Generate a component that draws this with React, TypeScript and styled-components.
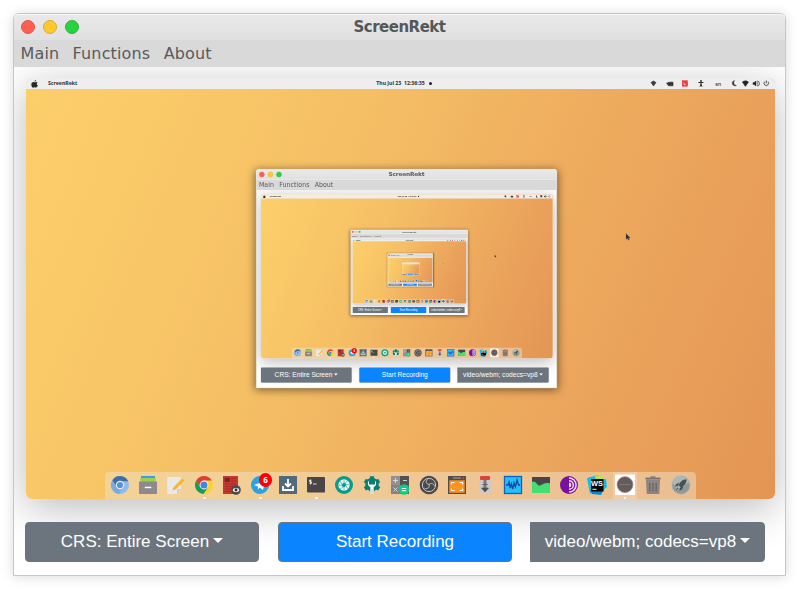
import React from "react";
import styled, { createGlobalStyle, css } from "styled-components";

const MAX_DEPTH = 5;
const NESTED_SCALE = 0.3894;

const GlobalStyle = createGlobalStyle`
  *, *::before, *::after { box-sizing: border-box; }
  body { margin: 0; background: #fff; overflow: hidden; }
`;

const Page = styled.div`
  width: 799px;
  height: 589px;
  padding: 13px;
  background: #fff;
`;

const Frame = styled.section<{ $nested: boolean }>`
  display: flex;
  flex-direction: column;
  width: 773px;
  height: 563px;
  border: 1px solid #c5c8c7;
  border-radius: 6px 6px 0 0;
  background: #fff;
  box-shadow: ${(p) =>
    p.$nested ? "0 4px 22px rgba(0, 0, 0, 0.5)" : "0 1px 12px rgba(0, 0, 0, 0.15)"};
`;

const TitleBar = styled.header`
  display: grid;
  grid-template-columns: 1fr auto 1fr;
  align-items: center;
  flex: none;
  height: 26px;
  padding: 0 7px 1px;
  border-radius: 5px 5px 0 0;
  border-top: 1px solid #f6f6f6;
  background: linear-gradient(#e9e9e9, #e0e0e0);
`;

const Lights = styled.div`
  display: flex;
  gap: 8px;
`;

const Light = styled.span<{ $color: string; $edge: string }>`
  width: 14px;
  height: 14px;
  border-radius: 50%;
  border: 1px solid ${(p) => p.$edge};
  background: ${(p) => p.$color};
`;

const Title = styled.h1`
  margin: 0;
  min-width: 92px;
  height: 24px;
  font: bold 15px/25px "DejaVu Sans", sans-serif;
  letter-spacing: -0.5px;
  color: #55585a;
`;

const MenuBar = styled.nav`
  display: flex;
  flex: none;
  gap: 13.3px;
  height: 27px;
  padding-left: 6.5px;
  background: #d9d9d9;
  font: 16px/27px "DejaVu Sans", sans-serif;
  letter-spacing: 0.15px;
  color: #595959;
`;

const Content = styled.main`
  flex: 1;
  padding: 11px 10px 0 12px;
  overflow: hidden;
`;

const Desktop = styled.div`
  position: relative;
  display: flex;
  flex-direction: column;
  width: 749px;
  height: 421px;
  border-radius: 6px;
  background: linear-gradient(113deg, #fccf6b 0%, #fac968 15%, #f5bf65 38%, #f0b260 55%, #eba45c 75%, #e69a57 92%, #e39654 100%);
  box-shadow: 0 9px 42px rgba(0, 0, 0, 0.27);
`;

const StatusBar = styled.div`
  display: grid;
  grid-template-columns: 1fr auto 1fr;
  align-items: center;
  flex: none;
  height: 11px;
  padding: 0 6px 0 5px;
  border-radius: 6px 6px 0 0;
  background: #eee;
  font: bold 5.2px/11px "Noto Sans", sans-serif;
  color: #303030;
`;

const AppName = styled.div`
  display: flex;
  align-items: center;
  gap: 10px;
`;

const Clock = styled.div`
  display: flex;
  align-items: center;
  gap: 4px;
  padding-left: 8px;
  white-space: pre;
`;

const Dot = styled.span`
  width: 3px;
  height: 3px;
  border-radius: 50%;
  background: #222;
`;

const Tray = styled.svg`
  justify-self: end;
  width: 120px;
  height: 11px;
`;

const Nested = styled.div`
  position: absolute;
  left: 229.8px;
  top: 91px;
  width: 773px;
  height: 563px;
  transform: scale(${NESTED_SCALE});
  transform-origin: 0 0;
`;

const Pointer = styled.svg`
  position: absolute;
  left: 599px;
  top: 155px;
  width: 6px;
  height: 8px;
`;

const Dock = styled.div`
  display: flex;
  justify-content: space-between;
  align-self: flex-start;
  width: 591px;
  height: 27px;
  margin: auto 0 0 79px;
  padding: 0 1px;
  border-radius: 4px 4px 0 0;
  background: rgba(239, 226, 202, 0.5);
`;

const DockItem = styled.div<{ $active?: boolean; $running?: boolean }>`
  position: relative;
  display: flex;
  justify-content: center;
  width: 28px;
  height: 27px;
  padding-top: 3.2px;
  svg { width: 20px; height: 20px; overflow: visible; }
  ${(p) => p.$active && css`
    background: linear-gradient(90deg, transparent 2px, rgba(255,255,255,.2) 2px 26px, transparent 26px);
  `}
  ${(p) => p.$running && css`
    &::after {
      content: "";
      position: absolute;
      left: 13px;
      bottom: 0;
      width: 2.5px;
      height: 2.5px;
      border-radius: 50%;
      background: #fff;
    }
  `}
`;

const Badge = styled.span`
  position: absolute;
  left: 12.5px;
  top: 1px;
  width: 13.5px;
  height: 13.5px;
  border-radius: 50%;
  background: #fb0007;
  color: #fff;
  text-align: center;
  font: bold 8px/13.5px "Noto Sans", sans-serif;
`;

const StormLabel = styled.span`
  position: absolute;
  left: 8px;
  top: 8px;
  width: 12.5px;
  color: #fff;
  text-align: center;
  font: bold 7.4px/8px "Liberation Sans", sans-serif;
`;

const Actions = styled.div`
  display: flex;
  gap: 19px;
  margin: 23px 0 0 -1px;
`;

const Button = styled.button<{ $primary?: boolean; $joined?: boolean }>`
  position: relative;
  display: flex;
  align-items: center;
  justify-content: center;
  flex: none;
  width: ${(p) => (p.$joined ? 235 : 234)}px;
  height: 40px;
  margin-left: ${(p) => (p.$joined ? -1 : 0)}px;
  padding: 0 0 1px;
  border: 1px solid #6c757d;
  border-radius: ${(p) => (p.$joined ? "0 4px 4px 0" : "4px")};
  background: ${(p) => (p.$primary ? "#0a84ff" : "#6c757d")};
  color: #fff;
  font: 17px/24px "Liberation Sans", Arial, sans-serif;
  white-space: nowrap;
`;

const Caret = styled.span`
  margin: 0 0 2px 4px;
  border: 5.5px solid transparent;
  border-top: 5px solid #fff;
  border-bottom: 0;
`;

type Item = { name: string; art: React.ReactNode; running?: boolean; active?: boolean; badge?: string };

const dockItems: Item[] = [
  { name: "chromium", art: <>
    <circle cx="10" cy="10" r="9" fill="#8ebcf1" />
    <path d="M2.3 5.3A9 9 0 0 1 18.2 6.2H10L6 12Z" fill="#3d6ea8" />
    <path d="M2.3 5.3A9 9 0 0 0 9 19L13 12H7Z" fill="#78aae6" />
    <circle cx="10" cy="10" r="4.2" fill="#e6f1fb" /><circle cx="10" cy="10" r="3.1" fill="#5c91ce" />
  </> },
  { name: "files", art: <>
    <rect x="3" y="1" width="14" height="4" fill="#3d9de8" /><rect x="2.3" y="3" width="15.4" height="4" fill="#a0cf4a" />
    <rect x="1" y="6.5" width="18" height="12.5" rx=".6" fill="#8d898d" /><rect x="6.8" y="11.7" width="6.5" height="1.5" fill="#fff" />
  </> },
  { name: "notes", art: <>
    <path d="M1.2 2H15v12l-4 5H1.2Z" fill="#e9e8ea" /><path d="M15 14h-4v5Z" fill="#cfcdd0" />
    <path d="M7.2 12.8 16 3.4l2.5 2.3-8.8 8.8-3.1.8Z" fill="#f9b72e" /><path d="m16 3.4 1-1.1 2.4 2.3-.9 1.1Z" fill="#f4d06b" />
  </> },
  { name: "chrome", running: true, art: <>
    <circle cx="10" cy="10" r="9" fill="#fcd12d" />
    <path d="M2.2 5.5A9 9 0 0 1 17.8 5.5H10L6 12Z" fill="#df3e35" />
    <path d="M2.2 5.5A9 9 0 0 0 9.5 19L14 12H6Z" fill="#169d58" />
    <circle cx="10" cy="10" r="4.4" fill="#fff" /><circle cx="10" cy="10" r="3.5" fill="#4285e8" />
  </> },
  { name: "viewer", art: <>
    <rect x="1" y="1" width="15" height="18" fill="#c63732" /><rect x="2.8" y="2.8" width="5" height="4" fill="#75251f" />
    <path d="M9 3.5h5M9 6h5M3 9h11M3 11.5h8M3 14h7M3 16.5h6" stroke="#a52c27" />
    <circle cx="14" cy="15" r="4.8" fill="#4b4b4b" /><ellipse cx="14" cy="15" rx="3.2" ry="2" fill="#eee" /><circle cx="14" cy="15" r="1.4" fill="#333" />
  </> },
  { name: "telegram", running: true, badge: "6", art: <>
    <circle cx="10" cy="10" r="9" fill="#27a4e2" /><path d="m4 10 11-4-2 9-3.3-2.4L8 14.5v-3Z" fill="#fff" />
  </> },
  { name: "download", art: <>
    <rect x="1" y="1" width="18" height="18" rx=".5" fill="#50697b" />
    <path d="M10 4v7M7 8.5l3 3 3-3M5 11v4h10v-4" fill="none" stroke="#fff" strokeWidth="1.8" />
  </> },
  { name: "terminal", running: true, art: <>
    <rect x="1" y="2" width="18" height="15.5" rx=".7" fill="#4a4648" />
    <path d="M5.5 5.3H3.5v1.5h2v1.6h-2M4.5 4.5v5M7 9h3.5" fill="none" stroke="#e8e8e8" strokeWidth=".9" />
  </> },
  { name: "shutter", art: <>
    <circle cx="10" cy="10" r="9" fill="#079b89" /><circle cx="10" cy="10" r="5.7" fill="#eefbf9" />
    <path d="M10 4.7v4L13.8 6M15.3 10l-4.2-1 2.6 4.8M10 15.3v-4L6.2 14M4.7 10l4.2 1-2.6-4.8" fill="none" stroke="#079b89" strokeWidth=".6" />
    <circle cx="10" cy="10" r="2" fill="#079b89" />
  </> },
  { name: "tweaks", art: <>
    <circle cx="10" cy="9.5" r="6.8" fill="#087f72" />
    <path d="M10 1.2v16.5M2.8 5.5l14.4 8.3M2.8 13.8l14.4-8.3" stroke="#087f72" strokeWidth="4.2" />
    <path d="M7 5.5a4.2 4.2 0 0 0 1.4 6.8V18.5h3.2v-6.2A4.2 4.2 0 0 0 13 5.5v4h-6Z" fill="#fff" />
    <path d="M8.4 14h3.2v4.5H8.4Z" fill="#dcdcdc" />
  </> },
  { name: "calculator", art: <>
    <path d="M1 1h9v9H1z" fill="#929092" /><path d="M10 1h9v9h-9z" fill="#545154" />
    <path d="M1 10h9v9H1z" fill="#858285" /><path d="M10 10h9v9h-9z" fill="#67676a" />
    <path d="M5.5 3v5M3 5.5h5M13 5.5h4M3.5 12.5l4 4m0-4-4 4" stroke="#dedede" strokeWidth=".9" />
    <circle cx="14" cy="14.5" r="5.2" fill="#08cf87" /><path d="M11.8 13.5h4.4m-4.4 2.2h4.4" stroke="#fff" />
  </> },
  { name: "obs", art: <>
    <circle cx="10" cy="10" r="9.3" fill="#4b494c" /><circle cx="10" cy="10" r="6.6" fill="none" stroke="#d5d3d4" strokeWidth=".9" />
    <path d="M10 9.5C7 9 6.5 6.5 8.5 4.3M10 9.5c2.5-2.2 5-.8 5.4 1.8M10 9.5c.9 3.2-1.5 4.8-4.4 3.8" fill="none" stroke="#c9c7c8" strokeWidth=".9" />
  </> },
  { name: "capture", art: <>
    <rect x="1" y="1" width="18" height="18" fill="#514b4d" /><path d="M6 3h8" stroke="#aaa" /><circle cx="16.3" cy="3.2" r="1" fill="#e64036" />
    <rect x="2.3" y="5.3" width="15.4" height="12.5" fill="#ff941d" />
    <path d="M4.5 9.5v-2h3M12.5 7.5h3v2M15.5 13.5v2h-3M7.5 15.5h-3v-2" fill="none" stroke="#fff" strokeWidth="1.1" />
  </> },
  { name: "cleaner", art: <>
    <rect x="4" y="5" width="12" height="14" rx="1" fill="#cbc9ca" /><rect x="5" y="1" width="10" height="4" rx="1" fill="#dc4235" />
    <path d="M10 5v10" stroke="#7c787a" strokeWidth="3" /><path d="M7 9.5h6M6.5 13h7L10 17Z" fill="#514c4e" stroke="#514c4e" strokeWidth=".6" />
  </> },
  { name: "monitor", art: <>
    <rect x="1.5" y="1.5" width="17" height="17" fill="#24c0fb" stroke="#1262bd" strokeWidth="1.3" />
    <path d="M3 10h2l1-3 1.2 6 1.2-4 1.3 5 1.3-6 1.4 4L14 5l1.5 5H17" fill="none" stroke="#1548a2" strokeWidth="1.3" />
  </> },
  { name: "system", art: <>
    <rect x="1" y="2" width="18" height="16" fill="#484547" /><path d="M1 7c4-2.5 5 4.5 8 3.5s5-3.5 10-2v9.5H1Z" fill="#43df73" />
  </> },
  { name: "tor", art: <>
    <circle cx="10" cy="10" r="9" fill="#78129e" /><path d="M10 2.2a7.8 7.8 0 0 1 0 15.6Z" fill="#eadcf0" />
    <path d="M10 4.3a5.7 5.7 0 0 1 0 11.4M10 7a3 3 0 0 1 0 6" fill="none" stroke="#78129e" strokeWidth="1.2" />
  </> },
  { name: "webstorm", art: <>
    <path d="m0 3 11-3v10L3 19Z" fill="#12bde7" /><path d="m8 1 5-1 6 5-1 10-8-3Z" fill="#bfe637" /><path d="m12 5 7-1 1 8-5 4Z" fill="#12bde7" /><path d="m3 15 14-1-3 6-9-1Z" fill="#0787d6" />
    <rect x="4" y="4" width="12.5" height="12.5" fill="#050505" />
    <path d="M5.5 14.3h4" stroke="#fff" />
  </> },
  { name: "screenrekt", running: true, active: true, art: <>
    <rect x="0" y="-.5" width="20" height="20.5" fill="#fff" /><circle cx="10" cy="9.6" r="7.9" fill="#625c5d" stroke="#b37672" strokeWidth=".8" /><path d="M4.5 9.5h11" stroke="#7c7676" strokeWidth="1" />
  </> },
  { name: "trash", art: <>
    <path d="M3 5h14l-.7 14H3.7z" fill="#8c8583" /><path d="M2.5 3.6h15" stroke="#77716f" strokeWidth="2" /><path d="M7.5 2h5" stroke="#77716f" strokeWidth="1.3" /><path d="M6.8 8v8.5M10 8v8.5M13.2 8v8.5" stroke="#696462" strokeWidth="1.3" />
  </> },
  { name: "launcher", art: <>
    <circle cx="10" cy="10" r="9.2" fill="#8e9998" stroke="#b4bcbb" strokeWidth=".8" /><path d="M1.5 7a9 9 0 0 1 17 0L6 15.5Z" fill="#adb7b6" />
    <path d="M15.5 4.3c-4 0-6.5 3-8 6l2.3 2.3c3.4-1.6 5.8-4.2 5.7-8.3ZM8 7.5l-3 1.7-1 2.6 3-.8M12.5 11.7l-1.7 3-2.6 1 .8-3M6.5 12.3l-2 3.2 3.2-2Z" fill="#465150" />
  </> },
];

const TrayIcons = ({ lettered }: { lettered: boolean }) => (
  <Tray viewBox="0 0 120 11" fill="none" stroke="#2d2d2d">
    <g transform="translate(-3 0)">
      <path d="M5 4.5 7.5 3 10 4.5 7.5 8ZM6 5h3" fill="#444" strokeWidth=".6" />
      <path d="M20.5 5h1.5l.5-.8h4.5v3.6h-4.5l-1-1.4Z" fill="#333" strokeWidth=".6" />
      <rect x="36.2" y="2.7" width="5.5" height="5.5" fill="#ed3830" stroke="#ed3830" strokeWidth=".5" />
      <path d="M38 4.2v2.5h2M41.3 3.4l1-1" stroke="#fff" strokeWidth=".6" />
      <path d="M52.4 4.5h5M55 3v3l-1 2.7M55 6l1 2.7" strokeWidth="1" /><circle cx="55" cy="2.8" r=".9" fill="#333" stroke="none" />
      {lettered && <text x="69.2" y="7.5" fill="#333" stroke="none" fontSize="5" fontWeight="500" fontFamily="Noto Sans">en</text>}
      <path d="M88.7 2.4a2.8 2.8 0 1 0 1.8 5.1 3 3 0 0 1-1.8-5.1Z" fill="#333" strokeWidth=".2" />
      <path d="M96.3 4c2-1.6 4.3-1.6 6.2 0L99.4 8.4Z" fill="#222" strokeWidth=".5" />
      <path d="M107 4.5h1.2L110 3v5l-1.8-1.5H107Z" fill="#222" strokeWidth=".5" /><path d="M111 3a2.5 2.5 0 0 1 0 5M111 4.4a1.2 1.2 0 0 1 0 2.2" strokeWidth=".7" />
    </g>
    <path d="M119 3.7a2.3 2.3 0 1 1-3.4 0M117.3 2.5v3" strokeWidth=".8" />
  </Tray>
);

const AppleLogo = () => (
  <svg width="7" height="8" viewBox="0 0 14 16" fill="#292929">
    <path d="M10 0c0 2-1 3.3-3 3.5C7 1.7 8.3.4 10 0ZM13 5.3c-2.2 1.4-1.8 4.5.8 5.4-.8 2.3-2.3 4.6-3.8 4.6-1.1 0-1.4-.7-2.8-.7s-1.8.7-2.8.7C2.5 15.3.6 12 .6 8.8c0-3 1.9-4.8 4-4.8 1.1 0 1.9.7 2.8.7.8 0 1.8-.8 3.2-.7 1 0 1.9.5 2.4 1.3Z" />
  </svg>
);

function AppWindow({ depth }: { depth: number }) {
  // Below these levels lettering is smaller than a pixel, so it is left out.
  const labelled = depth < 5;
  const finePrint = depth < 4;
  return (
    <Frame $nested={depth > 1}>
      <TitleBar>
        <Lights>
          <Light $color="#ff5f52" $edge="#db584b" />
          <Light $color="#ffc92c" $edge="#d9ac32" />
          <Light $color="#27d33f" $edge="#37ad42" />
        </Lights>
        <Title>{labelled && "ScreenRekt"}</Title>
      </TitleBar>
      <MenuBar>{labelled && <><span>Main</span><span>Functions</span><span>About</span></>}</MenuBar>
      <Content>
        <Desktop>
          <StatusBar>
            <AppName><AppleLogo />{finePrint && "ScreenRekt"}</AppName>
            <Clock>{finePrint && "Thu Jul 23  12:36:35"}<Dot /></Clock>
            <TrayIcons lettered={finePrint} />
          </StatusBar>
          <Dock>
            {dockItems.map((item) => (
              <DockItem key={item.name} $running={item.running} $active={item.active}>
                <svg viewBox="0 0 20 20">{item.art}</svg>
                {item.name === "webstorm" && finePrint && <StormLabel>WS</StormLabel>}
                {item.badge && <Badge>{finePrint && item.badge}</Badge>}
              </DockItem>
            ))}
          </Dock>
          {depth < MAX_DEPTH && <Nested><AppWindow depth={depth + 1} /></Nested>}
          <Pointer viewBox="0 0 6 8"><path d="M1 .5v6l1.4-1.2 1 2 1-.5-.9-1.9H5.3Z" fill="#222b3b" stroke="#8d7453" strokeWidth=".3" /></Pointer>
        </Desktop>
        <Actions>
          <Button>{labelled && "CRS: Entire Screen"}<Caret /></Button>
          <Button $primary>{labelled && "Start Recording"}</Button>
          <Button $joined>{labelled && "video/webm; codecs=vp8"}<Caret /></Button>
        </Actions>
      </Content>
    </Frame>
  );
}

export default function App() {
  return <><GlobalStyle /><Page><AppWindow depth={1} /></Page></>;
}
